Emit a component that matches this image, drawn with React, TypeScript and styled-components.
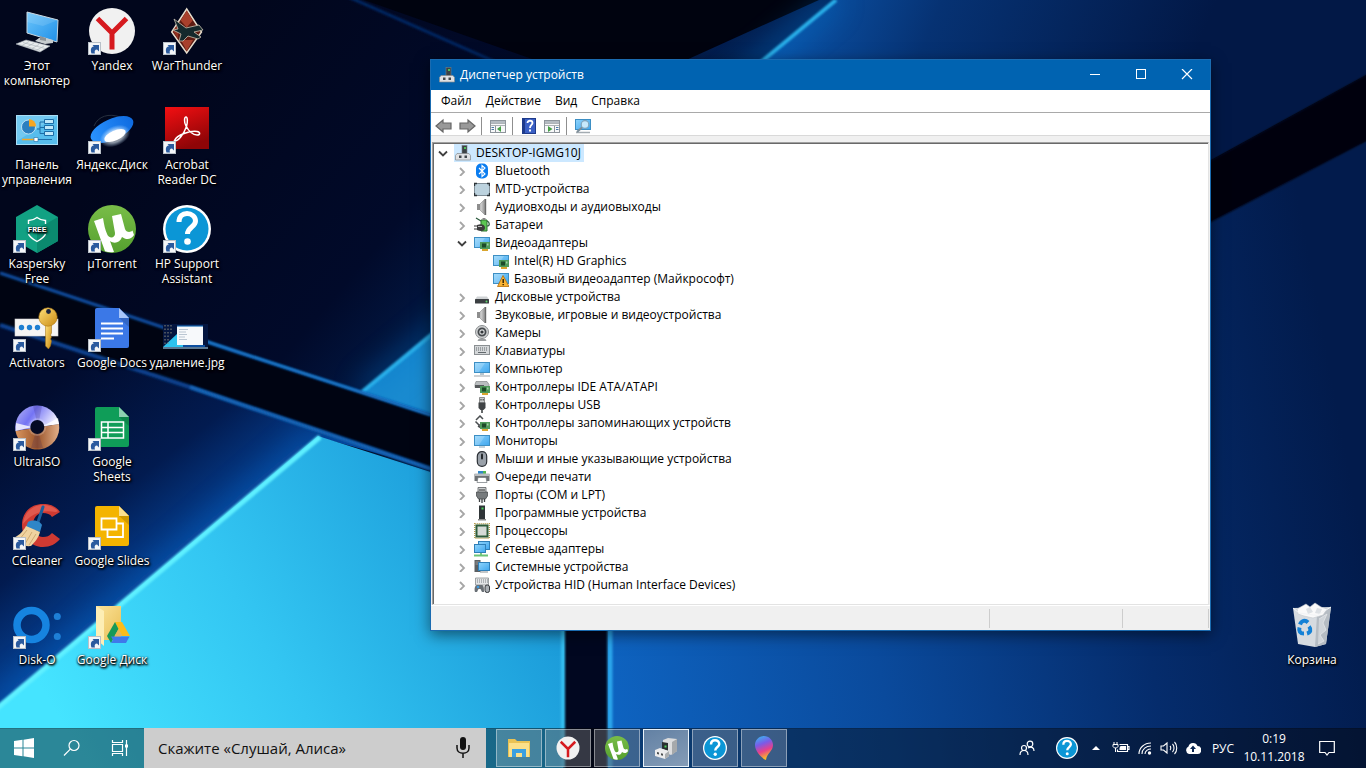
import React from "react";
import styled, { createGlobalStyle } from "styled-components";

const UI_FONT = '"Open Sans", "Noto Sans", sans-serif';

const GlobalStyle = createGlobalStyle`
  * { box-sizing: border-box; }
  body { margin: 0; font-family: ${UI_FONT}; font-size: 12px; }
  button, input { font: inherit; color: inherit; border: 0; padding: 0; background: none; border-radius: 0; }
  svg { display: block; flex: none; }
`;

const Screen = styled.div`
  position: relative;
  min-height: 100vh;
  display: flex;
  flex-direction: column;
  overflow: hidden;
  background: #010b28;
`;

const Wallpaper = styled.svg`
  position: absolute;
  inset: 0;
  width: 100%;
  height: 100%;
`;

const Desktop = styled.main`
  position: relative;
  flex: 1;
`;

const IconGrid = styled.div`
  display: grid;
  grid-auto-flow: column;
  grid-template-rows: repeat(7, 99px);
  grid-auto-columns: 74px;
  column-gap: 1px;
  width: max-content;
`;

const Shortcut = styled.button`
  display: flex;
  flex-direction: column;
  align-items: center;
  gap: 2px;
  width: 74px;
  height: 99px;
  padding-top: 8px;
  color: #fff;
  font-size: 12px;
  line-height: 15px;
  text-align: center;
  text-shadow: 0 1px 2px #000, 1px 1px 2px #000, 1px 1px 3px #000;
`;

const ShortcutLabel = styled.span<{ $wrap?: boolean }>`
  white-space: ${(p) => (p.$wrap ? "pre-line" : "nowrap")};
`;

const BinSpot = styled.div`
  position: absolute;
  right: 17px;
  bottom: 35px;
`;

/* ---------- Device manager window ---------- */

const Window = styled.section`
  position: absolute;
  left: 430px;
  top: 59px;
  width: min(781px, calc(100% - 430px));
  border: 1px solid #1a6bb0;
  background: #f0f0f0;
  color: #000;
  box-shadow: 0 4px 14px rgba(0, 0, 0, 0.5);
`;

const TitleBar = styled.header`
  display: flex;
  align-items: center;
  height: 30px;
  padding-left: 8px;
  gap: 5px;
  background: #0063b1;
  color: #fff;
`;

const Title = styled.h1`
  margin: 0;
  flex: 1;
  font-size: 12px;
  font-weight: 400;
  line-height: 16px;
`;

const CaptionButtons = styled.div`
  display: flex;
`;

const CaptionButton = styled.button`
  display: flex;
  align-items: center;
  justify-content: center;
  width: 46px;
  height: 30px;
`;

const MenuBar = styled.nav`
  display: flex;
  gap: 14px;
  height: 23px;
  padding: 0 10px;
  background: #fff;
  border-bottom: 1px solid #a9a9a9;
`;

const MenuItem = styled.button`
  line-height: 20px;
`;

const ToolBar = styled.div`
  display: flex;
  align-items: center;
  height: 23px;
  padding: 3px 4px 0;
  gap: 5px;
  background: #fff;
  border-bottom: 1px solid #d9d9d9;
`;

const ToolButton = styled.button`
  display: flex;
  width: 18px;
  height: 18px;
  align-items: center;
  justify-content: center;
`;

const ToolSeparator = styled.span`
  width: 1px;
  height: 18px;
  margin-right: 2px;
  background: #8f8f8f;
`;

const TreePane = styled.div`
  margin: 6px 1px 0;
  padding: 1px 0 10px;
  background: #fff;
  border: 1px solid;
  border-color: #a0a0a0 #e3e3e3 #e3e3e3 #a0a0a0;
  box-shadow: inset 1px 1px #696969;
`;

const Tree = styled.ul`
  list-style: none;
  margin: 0;
  padding: 0;
`;

const TreeRow = styled.div<{ $level: number }>`
  display: flex;
  align-items: center;
  gap: 3px;
  height: 18px;
  padding-left: ${(p) => 2 + p.$level * 19}px;
`;

const Expander = styled.span`
  width: 16px;
  display: flex;
  justify-content: center;
`;

const NodeBody = styled.span<{ $selected?: boolean }>`
  display: flex;
  align-items: center;
  gap: 5px;
  height: 18px;
  padding: 0 3px 0 1px;
  line-height: 18px;
  white-space: nowrap;
  background: ${(p) => (p.$selected ? "#cce8ff" : "transparent")};
`;

const StatusBar = styled.footer`
  display: flex;
  height: 25px;
  padding: 3px 1px 2px;
  border-top: 1px solid #fff;
`;

const StatusCell = styled.span<{ $width?: number }>`
  flex: ${(p) => (p.$width ? `0 0 ${p.$width}px` : "1")};
  border-right: 1px solid #cdcdcd;
`;

/* ---------- Taskbar ---------- */

const TaskBar = styled.footer`
  position: relative;
  display: flex;
  height: 40px;
  color: #fff;
  background: rgba(8, 8, 10, 0.42);
  box-shadow: inset 0 1px rgba(0, 0, 0, 0.15);
`;

const BarButton = styled.button<{ $width: number }>`
  display: flex;
  align-items: center;
  justify-content: center;
  width: ${(p) => p.$width}px;
  height: 40px;
`;

const SearchBox = styled.label`
  display: flex;
  align-items: center;
  width: 342px;
  height: 40px;
  padding: 0 14px;
  background: #cdcdcd;
  color: #111;
`;

const SearchInput = styled.input`
  flex: 1;
  min-width: 0;
  outline: none;
  font-size: 15px;
  line-height: 20px;
  &::placeholder { color: #111; opacity: 1; }
`;

const AppButtons = styled.div`
  display: flex;
  gap: 3px;
  padding: 1px 10px;
  flex: 1;
`;

const AppButton = styled.button<{ $active?: boolean }>`
  display: flex;
  align-items: center;
  justify-content: center;
  width: 46px;
  height: 38px;
  border: 1px solid ${(p) => (p.$active ? "#e8f2fa" : "rgba(255,255,255,0.42)")};
  background: ${(p) => (p.$active ? "linear-gradient(155deg, rgba(255,255,255,0.36), rgba(255,255,255,0.5))" : "rgba(255,255,255,0.2)")};
`;

const Tray = styled.div`
  display: flex;
  padding-right: 19px;
`;

const TrayIcons = styled.div`
  display: flex;
  padding-left: 4px;
`;

const Clock = styled.button`
  width: 66px;
  height: 40px;
  font-size: 12px;
  line-height: 18px;
`;

/* ---------- Desktop drawings ---------- */

const Arrow = () => (
  <g>
    <rect x="0.5" y="34.500" width="12" height="12" fill="#f4f6f8" stroke="#b9c0c8" />
    <path d="M3.500 45.500C2 41 3.500 38.500 6 38.500L4.500 37H11v6.500L9 41.500C7 41.500 6 43.500 7 45.500z" fill="#2a5a9e" />
  </g>
);

const Pic = ({ children, link = true }: { children: React.ReactNode; link?: boolean }) => (
  <svg width="48" height="48" viewBox="0 0 48 48" overflow="visible" aria-hidden="true">
    {children}
    {link && <Arrow />}
  </svg>
);

const Defs = () => (
  <defs>
    <linearGradient id="scr" x1="0" y1="0" x2="1" y2="1"><stop offset="0" stopColor="#6cc6fb" /><stop offset="1" stopColor="#1f8fe8" /></linearGradient>
    <linearGradient id="scr16" x1="0" y1="0" x2="1" y2="1"><stop offset="0" stopColor="#8fd4fc" /><stop offset="1" stopColor="#3fa6ee" /></linearGradient>
    <linearGradient id="red" x1="0" y1="0" x2="0.4" y2="1"><stop offset="0" stopColor="#f40f12" /><stop offset="1" stopColor="#8f0507" /></linearGradient>
    <linearGradient id="grn" x1="0" y1="0" x2="0" y2="1"><stop offset="0" stopColor="#79bd48" /><stop offset="1" stopColor="#55a02f" /></linearGradient>
    <linearGradient id="gold" x1="0" y1="0" x2="1" y2="1"><stop offset="0" stopColor="#ffe07a" /><stop offset="1" stopColor="#c98a12" /></linearGradient>
    <linearGradient id="discTop" x1="0" y1="0" x2="1" y2="0.4"><stop offset="0" stopColor="#b9b9f2" /><stop offset="0.45" stopColor="#7474f4" /><stop offset="1" stopColor="#f0f0ff" /></linearGradient>
    <linearGradient id="discBot" x1="0" y1="0" x2="1" y2="0"><stop offset="0" stopColor="#d9955f" /><stop offset="0.5" stopColor="#9b552b" /><stop offset="1" stopColor="#e2b08a" /></linearGradient>
    <linearGradient id="yd" x1="0" y1="0" x2="1" y2="0"><stop offset="0" stopColor="#2a93ff" /><stop offset="1" stopColor="#0f6be0" /></linearGradient>
    <linearGradient id="fold" x1="0" y1="0" x2="1" y2="1"><stop offset="0" stopColor="#fbe39a" /><stop offset="1" stopColor="#e9bf55" /></linearGradient>
    <linearGradient id="paint" x1="0" y1="0" x2="0.3" y2="1"><stop offset="0" stopColor="#2fc3f2" /><stop offset="0.4" stopColor="#7a5be8" /><stop offset="0.7" stopColor="#e8408a" /><stop offset="1" stopColor="#f7b52c" /></linearGradient>
    <linearGradient id="metal" x1="0" y1="0" x2="1" y2="0"><stop offset="0" stopColor="#e2e2e2" /><stop offset="1" stopColor="#8c8c8c" /></linearGradient>
    <radialGradient id="glow"><stop offset="0" stopColor="#fff" /><stop offset="0.6" stopColor="#e8f5ff" /><stop offset="1" stopColor="#bfe2ff" stopOpacity="0" /></radialGradient>
  </defs>
);

const MyPc = () => (
  <Pic link={false}>
    <path d="M14 4 45 12 44 34 14 25z" fill="url(#scr)" stroke="#c9d6df" strokeWidth="1" />
    <path d="M14 4 45 12 30 18 14 14z" fill="#fff" opacity="0.12" />
    <path d="m26 30 4-1 10 3v3l-8 1-10-3z" fill="#c8cdd0" />
    <path d="m27 28 6 2v3l-6-1z" fill="#8b9398" />
    <path d="m3 36 10-4 24 6-10 6z" fill="#e8ebed" stroke="#a7afb5" strokeWidth="0.600" />
    <path d="m6 36.500 21 6M10 34.500l22 6M9 37.500l7-4M14 39l7-4M19 40.500l7-4M24 42l7-4" stroke="#a9b2b8" strokeWidth="0.600" />
  </Pic>
);

const YandexMark = () => (
  <>
    <circle cx="24" cy="23" r="23" fill="#f1f1f1" />
    <path d="M9.500 10.500 24 25 38.500 10.500M24 24v17.500" fill="none" stroke="#d61a1f" strokeWidth="5" />
  </>
);

const WarThunder = () => (
  <Pic>
    <path d="M23.700 1 38.500 24 23.700 45 8.700 24z" fill="#5e1c12" stroke="#e7dccb" strokeWidth="1.500" />
    <path d="m23.700 2.500 6 10-6 7-6-7zM18 32h12l-6.300 11z" fill="#a8402c" />
    <path d="m16 14-6 9 5 8z" fill="#933020" />
    <path d="m11 11 12 9 13-3 4 5-9 2 7 5-3 2-10-3-5 5h-4l2-7-8-4 5-1z" fill="#15292c" stroke="#c9c2b0" strokeWidth="0.800" />
  </Pic>
);

const ControlPanel = () => (
  <Pic link={false}>
    <rect x="3.500" y="8.500" width="41" height="29" fill="#57bdec" stroke="#a9ddf5" />
    <path d="M4 9h40L4 34z" fill="#8fd6f5" opacity="0.500" />
    <circle cx="15.500" cy="20" r="7" fill="#2b7fc0" stroke="#d5effb" strokeWidth="0.800" />
    <path d="M16 19.500V12a7.500 7.500 0 0 1 7 7.500z" fill="#f6a623" />
    <path d="M24 22h3v-7h4M27 20.500h4M27 22v4.500h4" fill="none" stroke="#1c6da8" />
    <path d="M31.500 12.500h9v4h-9zM31.500 18.500h9v4h-9zM31.500 24.500h9v4h-9z" fill="#bfe8fa" stroke="#1c6da8" />
    <path d="M9 32.500h12" stroke="#f6a623" strokeWidth="1.500" />
    <path d="M24 32.500h15" stroke="#1c6da8" />
    <path d="M21 30.500h4v4h-4z" fill="#fff" stroke="#1c6da8" strokeWidth="0.600" />
  </Pic>
);

const YandexDisk = () => (
  <Pic>
    <path d="M6 19c4-10 15-13 26-9" fill="none" stroke="#27303f" strokeWidth="1" />
    <ellipse cx="24" cy="22.500" rx="23" ry="10.500" transform="rotate(-24 24 22.500)" fill="url(#yd)" />
    <ellipse cx="27" cy="29" rx="16" ry="10" transform="rotate(-24 27 29)" fill="url(#glow)" opacity="0.600" />
    <ellipse cx="27" cy="28.500" rx="11.500" ry="5" transform="rotate(-24 27 28.500)" fill="#fff" />
  </Pic>
);

const Acrobat = () => (
  <Pic>
    <rect x="2" y="0" width="44" height="42" fill="url(#red)" />
    <path d="M11.500 33.500c3.500 1.500 9-6 12-14 1.200-4 1.200-9.500-.5-9.500s-2.200 5 0 9c3 5.500 7.500 9 11 9 3.500 0 3.500-3 0-3.500-7-.8-20 3-22.500 9z" fill="none" stroke="#fff" strokeWidth="1.500" />
  </Pic>
);

const Kaspersky = () => (
  <Pic>
    <path d="M24-1 45 11v24L24 47 3 35V11z" fill="#12a183" />
    <path d="M24 23 45 11v24L24 47z" fill="#0b8a6f" />
    <path d="M15.500 18v-3.500c3 0 6-1 8.500-3 2.500 2 5.500 3 8.500 3V18M15.500 28c1 3 5 5.500 8.500 7.500 3.500-2 7.500-4.500 8.500-7.500" fill="none" stroke="#fff" strokeWidth="1.400" />
    <text x="24" y="26" textAnchor="middle" fontFamily="Liberation Mono, monospace" fontWeight="700" fontSize="8" fill="#fff">FREE</text>
  </Pic>
);

const MuMark = () => (
  <>
    <circle cx="24" cy="23" r="24" fill="url(#grn)" />
    <path d="M6 15 15 12c1 6 2 12 4.500 17 2 4 8 3 7.500-2L24 10l9-2 4 15c1 3 5 4 7.500 1.500L46 29c-3 5-8 5-12 2-2 6-8 7-12 4l4 11c-3 .5-6 .3-9-.8z" fill="#fff" />
  </>
);

const HelpMark = () => (
  <>
    <circle cx="24" cy="23" r="24" fill="#fff" />
    <circle cx="24" cy="23" r="21.500" fill="#0b96d6" />
    <path d="M16 16c0-6 3.500-8.500 8-8.500s8.500 3 8.500 7.500c0 6-8 6-8 13" fill="none" stroke="#fff" strokeWidth="5" />
    <circle cx="24.500" cy="35.500" r="3.300" fill="#fff" />
  </>
);

const Activators = () => (
  <Pic>
    <rect x="2" y="14" width="43" height="17" fill="#f5f5f5" stroke="#d2d2d2" strokeWidth="0.600" />
    <g fill="#1e7fd2"><circle cx="8.500" cy="22.500" r="2.700" /><circle cx="16.500" cy="22.500" r="2.700" /><circle cx="24.500" cy="22.500" r="2.700" /></g>
    <path d="M32.500 20h6v8l-1 2 1 2-1 2 1 2-1 5-2 3-3-3z" fill="url(#gold)" stroke="#9a6a10" strokeWidth="0.500" />
    <circle cx="35" cy="12" r="9.200" fill="url(#gold)" stroke="#b07b14" strokeWidth="0.600" />
    <circle cx="35.500" cy="6.500" r="2.400" fill="#1b2440" />
  </Pic>
);

const Sheet = ({ color, fold, children }: { color: string; fold: string; children: React.ReactNode }) => (
  <Pic>
    <path d="M9 3h22l10 10v28a2 2 0 0 1-2 2H9a2 2 0 0 1-2-2V5a2 2 0 0 1 2-2z" fill={color} />
    <path d="M31 13h10v9z" fill="#000" opacity="0.150" />
    <path d="M31 3l10 10H31z" fill={fold} />
    {children}
  </Pic>
);

const Docs = () => (
  <Sheet color="#3b78e7" fold="#a6c5fa">
    <path d="M13 18.500h22M13 23.500h22M13 28.500h22M13 33.500h13" stroke="#fff" strokeWidth="2.200" />
  </Sheet>
);
const Sheets = () => (
  <Sheet color="#0f9d58" fold="#8ed1b1">
    <path d="M13.500 18h22v16h-22zM13.500 23.500h22M13.500 28.500h22M20 18v16" fill="none" stroke="#fff" strokeWidth="1.500" />
  </Sheet>
);
const Slides = () => (
  <Sheet color="#f4b400" fold="#fbe08f">
    <path d="M19.500 27v7H35V20.500h-6" fill="none" stroke="#fff" strokeWidth="1.800" />
    <path d="M13.500 15.500h15v11h-15z" fill="none" stroke="#fff" strokeWidth="1.800" />
  </Sheet>
);

const Picture = () => (
  <Pic link={false}>
    <rect x="0" y="19" width="45" height="25" fill="#04153f" />
    <path d="M0 42 14 29l6 2v11H0z" fill="#2cc2ee" />
    <path d="M20 40h22v2H20z" fill="#0c4fa0" />
    <path d="M0 42h45v2H0z" fill="#5a7892" />
    <path d="M2 20v20M5 20v19M8 20v9" stroke="#8b8b7d" strokeDasharray="1.500 2" />
    <rect x="14" y="21" width="26" height="19" fill="#f7f9fb" />
    <path d="M14 21h26" stroke="#1769b4" strokeWidth="1.200" />
    <path d="M16 24.500h9M16 27h7M16 29.500h8M16 32h6M16 34.500h8" stroke="#a9b9c8" strokeWidth="0.800" />
  </Pic>
);

const Disc = () => (
  <Pic>
    <path d="M2.500 27a22 22 0 1 1 43.500-7z" fill="url(#discTop)" />
    <path d="M2.500 27 46 20a22 22 0 0 1-43.500 7z" fill="url(#discBot)" />
    <path d="M2.500 27 3 19l16 4zM46 20l-1-6-15 8z" fill="#fff" opacity="0.800" />
    <path d="M20 2h9l-4 20zM18 44h12l-6-20z" fill="#2a1a60" opacity="0.180" />
    <circle cx="24.300" cy="23" r="9" fill="#fff" opacity="0.200" />
    <circle cx="24.300" cy="23" r="7" fill="#050a24" />
  </Pic>
);

const CCleaner = () => (
  <Pic>
    <path d="M47 9C43 3 37 1 30 1 17 1 9 10 9 22s9 22 21 22c7 0 13-3 17-8l-8-6c-3 3-5 4-9 4-6 0-10-5-10-12s4-12 10-12c4 0 7 1 9 4z" fill="#cf3a32" />
    <path d="M45 8c-4-4-9-6-15-6C18 2 11 11 10 21c8-10 18-15 33-12z" fill="#e8675a" opacity="0.700" />
    <path d="M30 4 25 19" stroke="#1c5f9c" strokeWidth="3" strokeLinecap="round" />
    <path d="M15 19c5-3 12-1 14 3l-2 7-14-5z" fill="#2f86c8" />
    <path d="M13 23l14 6c-1 5-5 10-9 14-7 1-13-3-18-8 4-1 10-6 13-12z" fill="#f0d3a0" />
    <path d="m14 27-8 10M19 29l-7 12M23 31l-7 11" stroke="#c79f63" strokeWidth="0.800" />
  </Pic>
);

const DiskO = () => (
  <Pic>
    <circle cx="18.500" cy="23" r="14.500" fill="none" stroke="#1684e0" strokeWidth="7.500" />
    <circle cx="44.300" cy="14.500" r="3.500" fill="#1e7fd6" />
    <circle cx="44.300" cy="34.500" r="3.500" fill="#1e7fd6" />
  </Pic>
);

const GoogleDisk = () => (
  <Pic>
    <path d="M8 4h25v34H14z" fill="url(#fold)" />
    <path d="M8 4l8 5v35l-8-7z" fill="#fdeeb5" />
    <path d="m27 20 7 0 8 14h-8z" fill="#fbbc1c" />
    <path d="m27 20 3.500 7L23 41l-4-7z" fill="#159957" />
    <path d="M23 34.500h18.500L38 41H23l2-3z" fill="#3f78ea" />
    <path d="m30.500 27 4 7h-8z" fill="#e2b85a" />
  </Pic>
);

const Bin = () => (
  <Pic link={false}>
    <path d="M5 6 43 5 38 42 27 45 10 42z" fill="#d6dbe0" />
    <path d="M29 13 43 5 38 42 27 45z" fill="#b5bcc3" />
    <path d="M9 7 18 2l4 3 5-4 6 4 6 2-4 6-10 3-9-2-6-2z" fill="#fafafa" stroke="#c3c8cd" strokeWidth="0.600" />
    <path d="m18 7 4-2 3 5-5 2zM29 6l5 1-2 5-5-1z" fill="#dde1e5" />
    <path d="M5 6 11 11l18 2.500L43 5" fill="none" stroke="#f2f4f6" strokeWidth="1" />
    <path d="m31 17 8-5-4 9 3 7-6 5 4 6-6 3" fill="#cfd4d9" stroke="#e3e6e9" strokeWidth="0.800" />
    <g fill="none" stroke="#1481d6" strokeWidth="4">
      <path d="M12 22.500c1.500-4 5-5 8-2" /><path d="M21 24.500c2.500 3 1.500 6-2 7" /><path d="M16 31.500c-4 0-5.500-2.500-4.500-6" />
    </g>
  </Pic>
);

type Item = { label: string; art: React.ReactNode; wrap?: boolean };
const shortcuts: Item[] = [
  { label: "Этот\nкомпьютер", art: <MyPc />, wrap: true },
  { label: "Панель\nуправления", art: <ControlPanel />, wrap: true },
  { label: "Kaspersky\nFree", art: <Kaspersky />, wrap: true },
  { label: "Activators", art: <Activators /> },
  { label: "UltraISO", art: <Disc /> },
  { label: "CCleaner", art: <CCleaner /> },
  { label: "Disk-O", art: <DiskO /> },
  { label: "Yandex", art: <Pic><YandexMark /></Pic> },
  { label: "Яндекс.Диск", art: <YandexDisk /> },
  { label: "µTorrent", art: <Pic><MuMark /></Pic> },
  { label: "Google Docs", art: <Docs /> },
  { label: "Google\nSheets", art: <Sheets />, wrap: true },
  { label: "Google Slides", art: <Slides /> },
  { label: "Google Диск", art: <GoogleDisk /> },
  { label: "WarThunder", art: <WarThunder /> },
  { label: "Acrobat\nReader DC", art: <Acrobat />, wrap: true },
  { label: "HP Support\nAssistant", art: <Pic><HelpMark /></Pic>, wrap: true },
  { label: "удаление.jpg", art: <Picture /> },
];

/* ---------- Tree drawings ---------- */

const Chip = () => (
  <g>
    <rect x="6" y="7" width="10" height="7" fill="#4f9a5a" />
    <path d="M8 8.500h4v4H8z" fill="#1d4a28" />
    <path d="M13 8.500h1.500v2H13z" fill="#9fd0a4" />
    <path d="M8 14h6v2H8z" fill="#d9a52e" />
  </g>
);
const Screen16 = () => (
  <g>
    <rect x="0.500" y="2.500" width="15" height="10" fill="url(#scr16)" stroke="#3d8fc4" />
    <path d="M1 3h10L5 12H1z" fill="#fff" opacity="0.200" />
  </g>
);

const glyphs: Record<string, React.ReactNode> = {
  root: <g><rect x="7" y="0.500" width="5" height="9.500" fill="#3c4245" stroke="#777d80" strokeWidth="0.600" /><rect x="9" y="2" width="2" height="2" fill="#4fc05a" /><path d="M2 8.500h12l1.500 2V15H.5v-4.500z" fill="#dfe1e3" stroke="#85898c" strokeWidth="0.700" /><path d="M4 10.500h2.500V13H4zM9.500 10.500H12V13H9.500z" fill="#42484c" /></g>,
  bt: <g><rect x="2" y="0.500" width="12" height="15" rx="5" fill="#0a7df0" /><path d="m5 5 6 6-3 2.500v-11L11 5l-6 6" fill="none" stroke="#fff" strokeWidth="1.100" /></g>,
  mtd: <g><rect x="0.500" y="2.500" width="15" height="12" rx="1" fill="#bcd2de" stroke="#7f8d97" /><path d="M0.500 5V2.500H3M13 2.500h2.500V5M0.500 12v2.500H3M13 14.500h2.500V12" fill="none" stroke="#2d3439" strokeWidth="1.400" /></g>,
  audio: <g><path d="M3 5h3v6H3z" fill="#8e8e8e" /><path d="m6 5 5-5v16l-5-5z" fill="url(#metal)" stroke="#8a8a8a" strokeWidth="0.600" /><path d="M11 0h1.200v16H11z" fill="#6a6a6a" /></g>,
  battery: <g><path d="M7 3h6v11H7z" fill="#5cc653" stroke="#2c7430" /><path d="M8.500 1h3v2h-3z" fill="#888" /><path d="M2 1l5 3M13 9c3 0 3-4 0-5" fill="none" stroke="#28583a" strokeWidth="1.200" /><path d="M0 9h3M0 12h3" stroke="#333" /><path d="M3 8c5-2 8 0 8 3s-4 4-8 2z" fill="#3c3c3c" /><path d="M4 9.500h4" stroke="#bbb" /></g>,
  video: <g><Screen16 /><Chip /></g>,
  warn: <g><Screen16 /><path d="M10 4.500 16 15.500H4.500z" fill="#f9b233" stroke="#b86e0a" strokeWidth="0.800" /><path d="M10.200 8v4M10.200 13v1.300" stroke="#2b1b00" strokeWidth="1.400" /></g>,
  disk: <g><path d="M3 7.500h10l2 3H1z" fill="#d0d3d5" /><rect x="1" y="10" width="14" height="4.500" rx="0.500" fill="#3b3f42" /><circle cx="12.500" cy="12.500" r="1" fill="#5fd36a" /></g>,
  camera: <g><circle cx="8" cy="7" r="6.500" fill="#cfd1d2" stroke="#8b8e90" /><circle cx="8" cy="7" r="3.600" fill="#d8dadb" stroke="#45494c" strokeWidth="1.800" /><circle cx="8" cy="7" r="1.600" fill="#33373a" /><path d="M4.500 14h7l1 2h-9z" fill="#9c9fa1" /></g>,
  keyboard: <g><rect x="0.500" y="2.500" width="15" height="9" fill="#d4d7d9" stroke="#8a8f92" /><path d="M2 5h12M2 7h12" stroke="#62686c" strokeDasharray="1 1" /><path d="M4 9.500h8" stroke="#62686c" /></g>,
  computer: <g><rect x="0.500" y="1.500" width="15" height="10" fill="url(#scr16)" stroke="#3d8fc4" /><path d="M1 2h10L5 11H1z" fill="#fff" opacity="0.200" /><path d="M0 15h16" stroke="#9fa6ab" /><path d="M6 12h4v2H6z" fill="#b5c5cf" /></g>,
  ide: <g><path d="M2 2.500h11l2 3v3H1v-3z" fill="#b9bdbf" stroke="#76797b" strokeWidth="0.600" /><path d="M1 6h9v3H1z" fill="#55595b" /><Chip /></g>,
  usb: <g><path d="M5.500 0.500h5V6h-5z" fill="#c9cccd" stroke="#666" strokeWidth="0.700" /><path d="M6.500 2h1v1.500h-1zM8.700 2h1v1.500h-1z" fill="#333" /><path d="M4.500 5.500h7V11l-2 2h-3l-2-2z" fill="#404446" /><path d="M8 12v4" stroke="#404446" strokeWidth="1.600" /></g>,
  storage: <g><path d="m2 5 4-4 3 3M1.500 6.500 5 10h3M4 11l5 3" fill="none" stroke="#4a4e50" strokeWidth="1.500" /><Chip /></g>,
  monitor: <g><rect x="0.500" y="2.500" width="15" height="10" fill="url(#scr16)" stroke="#3d8fc4" /><path d="M1 3h10L5 12H1z" fill="#fff" opacity="0.200" /><path d="M5 13.500h6v1H5z" fill="#8da6b7" /></g>,
  mouse: <g><rect x="3.300" y="0.700" width="9.400" height="14.600" rx="4.500" fill="#9aa1a9" stroke="#2b2f35" strokeWidth="1.200" /><rect x="7" y="2.500" width="2" height="6" rx="1" fill="#24282c" /></g>,
  printer: <g><path d="M4 2h8v3H4z" fill="#2f86c8" /><path d="M9 2h3v3H9z" fill="#4fb653" /><path d="M.5 5h15v7H.5z" fill="#6d7174" /><path d="M.5 4.500h15V7H.5z" fill="#b9bdc0" /><path d="M4 8.500h8l1 5H3z" fill="#fff" stroke="#70757a" strokeWidth="0.700" /></g>,
  port: <g><path d="M4 0.500h8v5H4z" fill="#c9cccd" stroke="#5e6163" strokeWidth="0.800" /><path d="M5.500 2h1v2h-1zM7.500 2h1v2h-1zM9.500 2h1v2h-1z" fill="#333" /><path d="M2.500 5h11v4l-2 3h-7l-2-3z" fill="#777b7d" stroke="#3d4042" strokeWidth="0.700" /><path d="M5.500 12v3M8 12v4M10.500 12v3" stroke="#3d4042" strokeWidth="1.300" /></g>,
  soft: <g><path d="M5 0.500h6V14H5z" fill="#2f3437" /><path d="M4 14h8v1.500H4z" fill="#888" /><path d="M7.500 2.500h2v2h-2z" fill="#49d15b" /></g>,
  cpu: <g><rect x="0.700" y="0.700" width="14.600" height="14.600" fill="none" stroke="#b29a4c" strokeWidth="1.400" strokeDasharray="1 1" /><rect x="1.500" y="1.500" width="13" height="13" fill="#2d5c3b" /><rect x="3.500" y="3.500" width="9" height="9" fill="#d5dad6" /></g>,
  net: <g><rect x="4.500" y="0.500" width="11" height="8" fill="url(#scr16)" stroke="#2f7fb8" /><rect x="0.500" y="3.500" width="11" height="8" fill="url(#scr16)" stroke="#2f7fb8" /><path d="M7 12v2M0 14.500h14" stroke="#6cc477" strokeWidth="1.800" /></g>,
  system: <g><path d="M.5 1h6v12h-6z" fill="#5b5f62" /><path d="M1.500 3h4M1.500 5h4" stroke="#b0b0b0" strokeWidth="0.700" /><rect x="4.500" y="3.500" width="11" height="8" fill="url(#scr16)" stroke="#2f7fb8" /><path d="M6 13h8" stroke="#8a8f92" /></g>,
  hid: <g><path d="M1.500 1h13v7h-13z" fill="#e3e5e7" stroke="#8a8f92" strokeWidth="0.800" /><path d="M3 3h11M3 5h11" stroke="#7a8084" strokeDasharray="1 1" /><path d="M1 15c-1-3 0-7 2-7h5c2 0 2 4 2 7H8L6.500 12h-2L3 15z" fill="#6a7076" /><circle cx="4" cy="10" r="1.300" fill="#3e9be0" /><rect x="11" y="8" width="4.500" height="7.500" rx="2" fill="#a9aeb3" stroke="#34383c" /></g>,
};

const TreeGlyph = ({ kind }: { kind: string }) => (
  <svg width="16" height="16" viewBox="0 0 16 16" aria-hidden="true">{glyphs[kind]}</svg>
);

const Chevron = ({ open }: { open?: boolean }) => (
  <svg width="10" height="10" viewBox="0 0 10 10" aria-hidden="true">
    {open
      ? <path d="M1 3.500l4 4 4-4" fill="none" stroke="#404040" strokeWidth="1.800" />
      : <path d="M3 2l4 4-4 4" fill="none" stroke="#a6a6a6" strokeWidth="1.800" />}
  </svg>
);

type Node = { level: number; label: string; icon: string; open?: boolean; leaf?: boolean; selected?: boolean };
const nodes: Node[] = [
  { level: 0, label: "DESKTOP-IGMG10J", icon: "root", open: true, selected: true },
  { level: 1, label: "Bluetooth", icon: "bt" },
  { level: 1, label: "MTD-устройства", icon: "mtd" },
  { level: 1, label: "Аудиовходы и аудиовыходы", icon: "audio" },
  { level: 1, label: "Батареи", icon: "battery" },
  { level: 1, label: "Видеоадаптеры", icon: "video", open: true },
  { level: 2, label: "Intel(R) HD Graphics", icon: "video", leaf: true },
  { level: 2, label: "Базовый видеоадаптер (Майкрософт)", icon: "warn", leaf: true },
  { level: 1, label: "Дисковые устройства", icon: "disk" },
  { level: 1, label: "Звуковые, игровые и видеоустройства", icon: "audio" },
  { level: 1, label: "Камеры", icon: "camera" },
  { level: 1, label: "Клавиатуры", icon: "keyboard" },
  { level: 1, label: "Компьютер", icon: "computer" },
  { level: 1, label: "Контроллеры IDE ATA/ATAPI", icon: "ide" },
  { level: 1, label: "Контроллеры USB", icon: "usb" },
  { level: 1, label: "Контроллеры запоминающих устройств", icon: "storage" },
  { level: 1, label: "Мониторы", icon: "monitor" },
  { level: 1, label: "Мыши и иные указывающие устройства", icon: "mouse" },
  { level: 1, label: "Очереди печати", icon: "printer" },
  { level: 1, label: "Порты (COM и LPT)", icon: "port" },
  { level: 1, label: "Программные устройства", icon: "soft" },
  { level: 1, label: "Процессоры", icon: "cpu" },
  { level: 1, label: "Сетевые адаптеры", icon: "net" },
  { level: 1, label: "Системные устройства", icon: "system" },
  { level: 1, label: "Устройства HID (Human Interface Devices)", icon: "hid" },
];

/* ---------- Toolbar drawings ---------- */

const ArrowTool = ({ back }: { back?: boolean }) => (
  <svg width="18" height="16" viewBox="0 0 18 16" aria-hidden="true">
    <path
      d={back ? "M1 8l7-6v3h8v6H8v3z" : "M17 8l-7-6v3H2v6h8v3z"}
      fill="#999" stroke="#666" strokeWidth="1.200"
    />
  </svg>
);

const PanelTool = ({ flip }: { flip?: boolean }) => (
  <svg width="16" height="16" viewBox="0 0 16 16" aria-hidden="true">
    <rect x="0.500" y="2.500" width="15" height="12" fill="#f7f8f9" stroke="#8d949b" />
    <path d="M1 3h14v2H1z" fill="#b4bbc2" /><path d="M1 5.500h14M1 7.500h14" stroke="#8d949b" strokeWidth="0.700" />
    {flip ? (
      <><path d="M10.500 8v6" stroke="#8d949b" /><path d="M12 9.500h2.500M12 11.500h2.500" stroke="#4a78a8" /><path d="M4 8l4.500 3L4 14z" fill="#46a046" /></>
    ) : (
      <><path d="M5.500 8v6" stroke="#8d949b" /><path d="M1.500 9.500H4M1.500 11.500H4" stroke="#4a78a8" /><path d="M11 8l-4 3 4 3z" fill="#46a046" /></>
    )}
  </svg>
);

const HelpTool = () => (
  <svg width="14" height="16" viewBox="0 0 14 16" aria-hidden="true">
    <rect x="0.500" y="0.500" width="13" height="15" fill="#3a5fc4" stroke="#1e3a8a" />
    <path d="M1 1h2v14H1z" fill="#1e3a8a" />
    <path d="M5.500 5c0-3 5-3 5 0 0 2-2.500 2-2.500 5" fill="none" stroke="#fff" strokeWidth="1.800" />
    <path d="M7 11.500h2v2H7z" fill="#fff" />
  </svg>
);

const ScanTool = () => (
  <svg width="18" height="16" viewBox="0 0 18 16" aria-hidden="true">
    <rect x="1.500" y="1.500" width="15" height="10" fill="url(#scr16)" stroke="#3d8fc4" />
    <path d="M2 14.500h14" stroke="#a3abb1" strokeWidth="1.500" />
    <circle cx="11" cy="6.500" r="3.800" fill="#c6e9fc" stroke="#7fa3ba" strokeWidth="1.200" />
    <path d="M8 9.500 3 14" stroke="#7c8d99" strokeWidth="2" />
  </svg>
);

/* ---------- Taskbar drawings ---------- */

const Small = ({ size = 24, children }: { size?: number; children: React.ReactNode }) => (
  <svg width={size} height={size} viewBox="0 -1 48 48" overflow="visible" aria-hidden="true">{children}</svg>
);

const line = { fill: "none", stroke: "#fff", strokeWidth: 1.2 };

const WallpaperArt = () => (
  <Wallpaper viewBox="0 0 1366 768" preserveAspectRatio="xMidYMid slice" aria-hidden="true">
    <Defs />
    <defs>
      <filter id="soft" filterUnits="userSpaceOnUse" x="-20" y="-20" width="1406" height="808"><feGaussianBlur stdDeviation="1.2" /></filter>
      <filter id="haze" filterUnits="userSpaceOnUse" x="-60" y="-60" width="1486" height="888"><feGaussianBlur stdDeviation="14" /></filter>
      <linearGradient id="leftTop" gradientUnits="userSpaceOnUse" x1="250" y1="0" x2="640" y2="330"><stop offset="0" stopColor="#01061c" /><stop offset="0.500" stopColor="#010a2a" /><stop offset="1" stopColor="#043070" /></linearGradient>
      <linearGradient id="leftLow" gradientUnits="userSpaceOnUse" x1="60" y1="380" x2="200" y2="560"><stop offset="0" stopColor="#010c2e" /><stop offset="0.550" stopColor="#021b50" /><stop offset="1" stopColor="#0648a0" /></linearGradient>
      <linearGradient id="right" gradientUnits="userSpaceOnUse" x1="770" y1="60" x2="1130" y2="210"><stop offset="0" stopColor="#0b53a8" /><stop offset="0.350" stopColor="#063273" /><stop offset="1" stopColor="#021846" /></linearGradient>
      <linearGradient id="rightLow" gradientUnits="userSpaceOnUse" x1="612" y1="700" x2="1366" y2="560"><stop offset="0" stopColor="#0e63c0" /><stop offset="0.350" stopColor="#0a4a9c" /><stop offset="0.700" stopColor="#052c6c" /><stop offset="1" stopColor="#021b4c" /></linearGradient>
      <linearGradient id="pane" gradientUnits="userSpaceOnUse" x1="60" y1="720" x2="470" y2="480"><stop offset="0" stopColor="#45e4ff" /><stop offset="0.450" stopColor="#33c6f2" /><stop offset="1" stopColor="#1b9bd9" /></linearGradient>
    </defs>
    <rect width="1366" height="768" fill="#010820" />
    <path d="M0 0H836L362 392 431 414 0 273z" fill="url(#leftTop)" />
    <path d="M350-5 620 90 830-5z" fill="#00030f" />
    <path d="M344-5 500 64" stroke="#062a66" strokeWidth="3" filter="url(#soft)" />
    <path d="M836 0H1366V75L700 440 431 414 362 392z" fill="url(#right)" />
    <path d="M431 336 362 392 431 416z" fill="#1a8bd0" />
    <path d="M500 700 1211 221 1366 141V768H500z" fill="url(#rightLow)" />
    <path d="M1180 178 1376 70V136L1180 238z" fill="#00040f" filter="url(#soft)" />
    <path d="M0 325 431 468 318 437 0 705z" fill="url(#leftLow)" />
    <path d="M836 0 362 392" stroke="#1173c8" strokeWidth="14" opacity="0.500" filter="url(#haze)" />
    <path d="M836 0 362 392" stroke="#2bb0ea" strokeWidth="4" filter="url(#soft)" />
    <path d="M318 437 0 705" stroke="#0a66c4" strokeWidth="18" opacity="0.500" filter="url(#haze)" />
    <path d="M0 273 240 353 431 414 600 470V520L431 468 190 387 0 325z" fill="#000412" />
    <path d="M318 436 431 472 566 520V768H0V705z" fill="url(#pane)" />
    <path d="M565 500H608V768H563z" fill="#010720" />
    <path d="M0 273 240 353 431 415" fill="none" stroke="#0f4fa4" strokeWidth="3" filter="url(#soft)" />
    <path d="M190 336 431 415" stroke="#1c86d8" strokeWidth="2" filter="url(#soft)" />
    <path d="M0 325 190 387 431 469" fill="none" stroke="#0a4290" strokeWidth="4" filter="url(#soft)" />
    <path d="M190 387 431 469" stroke="#1668b8" strokeWidth="3" filter="url(#soft)" />
    <path d="M320 437-4 709" stroke="#5ff0ff" strokeWidth="5" filter="url(#soft)" />
    <path d="M563 600V768" stroke="#35bdf0" strokeWidth="4" filter="url(#soft)" />
    <path d="M610 600V768" stroke="#2aa6ec" strokeWidth="5" filter="url(#soft)" />
  </Wallpaper>
);

export default function App() {
  return (
    <Screen>
      <GlobalStyle />
      <WallpaperArt />
      <Desktop>
        <IconGrid>
          {shortcuts.map((s) => (
            <Shortcut key={s.label} type="button">
              {s.art}
              <ShortcutLabel $wrap={s.wrap}>{s.label}</ShortcutLabel>
            </Shortcut>
          ))}
        </IconGrid>
        <BinSpot>
          <Shortcut type="button"><Bin /><ShortcutLabel>Корзина</ShortcutLabel></Shortcut>
        </BinSpot>

        <Window aria-label="Диспетчер устройств">
          <TitleBar>
            <TreeGlyph kind="root" />
            <Title>Диспетчер устройств</Title>
            <CaptionButtons>
              <CaptionButton type="button" aria-label="Свернуть"><svg width="12" height="12"><path d="M1 5.500h10" stroke="#fff" /></svg></CaptionButton>
              <CaptionButton type="button" aria-label="Развернуть"><svg width="12" height="12"><rect x="1.500" y="0.500" width="9" height="9" fill="none" stroke="#fff" /></svg></CaptionButton>
              <CaptionButton type="button" aria-label="Закрыть"><svg width="12" height="12"><path d="M1 0l10 10M11 0 1 10" stroke="#fff" strokeWidth="1.200" /></svg></CaptionButton>
            </CaptionButtons>
          </TitleBar>
          <MenuBar>
            {["Файл", "Действие", "Вид", "Справка"].map((m) => <MenuItem key={m} type="button">{m}</MenuItem>)}
          </MenuBar>
          <ToolBar>
            <ToolButton type="button" aria-label="Назад"><ArrowTool back /></ToolButton>
            <ToolButton type="button" aria-label="Вперёд"><ArrowTool /></ToolButton>
            <ToolSeparator />
            <ToolButton type="button" aria-label="Показать дерево консоли"><PanelTool /></ToolButton>
            <ToolSeparator />
            <ToolButton type="button" aria-label="Справка"><HelpTool /></ToolButton>
            <ToolButton type="button" aria-label="Показать панель действий"><PanelTool flip /></ToolButton>
            <ToolSeparator />
            <ToolButton type="button" aria-label="Обновить конфигурацию"><ScanTool /></ToolButton>
          </ToolBar>
          <TreePane>
            <Tree role="tree">
              {nodes.map((n) => (
                <li key={n.label} role="treeitem" aria-level={n.level + 1} aria-selected={!!n.selected} aria-expanded={n.leaf ? undefined : !!n.open}>
                  <TreeRow $level={n.level}>
                    <Expander>{!n.leaf && <Chevron open={n.open} />}</Expander>
                    <NodeBody $selected={n.selected}><TreeGlyph kind={n.icon} />{n.label}</NodeBody>
                  </TreeRow>
                </li>
              ))}
            </Tree>
          </TreePane>
          <StatusBar><StatusCell /><StatusCell $width={133} /><StatusCell $width={86} /></StatusBar>
        </Window>
      </Desktop>

      <TaskBar>
        <BarButton $width={48} type="button" aria-label="Пуск">
          <svg width="20" height="20" viewBox="0 0 20 20"><path d="M0 3l8.500-1.200v7.700H0zM9.500 1.700 20 0v9.500H9.500zM0 10.500h8.500v7.700L0 17zM9.500 10.500H20V20L9.500 18.300z" fill="#fff" /></svg>
        </BarButton>
        <BarButton $width={48} type="button" aria-label="Поиск">
          <svg width="18" height="18" viewBox="0 0 18 18"><circle cx="11" cy="6.500" r="5" {...line} /><path d="M7.300 10.200 1 16.500" {...line} /></svg>
        </BarButton>
        <BarButton $width={48} type="button" aria-label="Представление задач">
          <svg width="18" height="18" viewBox="0 0 18 18"><path d="M1.500 1v2.500h10V1M1.500 17v-2.500h10V17M1.500 5.500h10v7h-10zM15.500 1v16" {...line} /><path d="M14 5.500h3v3h-3z" fill="#fff" /></svg>
        </BarButton>
        <SearchBox>
          <SearchInput type="text" aria-label="Поиск" placeholder="Скажите «Слушай, Алиса»" />
          <svg width="18" height="22" viewBox="0 0 18 22" aria-hidden="true">
            <rect x="6" y="0" width="6" height="13" rx="3" fill="#111" />
            <path d="M3 8v3c0 7 12 7 12 0V8M9 16v5" fill="none" stroke="#111" strokeWidth="1.500" />
          </svg>
        </SearchBox>
        <AppButtons>
          <AppButton type="button" aria-label="Проводник">
            <svg width="22" height="20" viewBox="0 0 22 20">
              <path d="M0 1h7l2 2h13v16H0z" fill="#e9c254" /><path d="M1 5h20v14H1z" fill="#fbe08a" />
              <path d="M4 19v-8h14v8h-4v-4H8v4z" fill="#3aa0e0" />
            </svg>
          </AppButton>
          <AppButton type="button" aria-label="Yandex"><Small><YandexMark /></Small></AppButton>
          <AppButton type="button" aria-label="µTorrent"><Small><MuMark /></Small></AppButton>
          <AppButton $active type="button" aria-label="Диспетчер устройств">
            <svg width="26" height="24" viewBox="0 0 26 24">
              <path d="M10 4 15 2l9 1v12l-6 4-8-3z" fill="#dcddde" /><path d="M19 6l5-3v12l-5 4z" fill="#a6a9ab" />
              <path d="M9 6l6 1v8l-6-2z" fill="#2a2f31" /><path d="M11.500 9.500h2v2h-2z" fill="#4fd05c" />
              <path d="M2 14l5-2 9 3v5l-4 3-10-3z" fill="#ececed" /><path d="M12 18l4-3v5l-4 3z" fill="#aaadaf" />
              <path d="M4 16l2 .6v2l-2-.6zM8 17.200l2 .6v2l-2-.6z" fill="#4a4e50" />
            </svg>
          </AppButton>
          <AppButton type="button" aria-label="HP Support Assistant"><Small><HelpMark /></Small></AppButton>
          <AppButton type="button" aria-label="Paint 3D">
            <svg width="20" height="26" viewBox="0 0 20 26"><path d="M10 1c5 0 9 4 9 9 0 6-6 8-7 15-3-1-11-8-11-15 0-5 4-9 9-9z" fill="url(#paint)" /></svg>
          </AppButton>
        </AppButtons>
        <Tray>
          <BarButton $width={40} type="button" aria-label="Люди">
            <svg width="16" height="16" viewBox="0 0 16 16"><circle cx="11" cy="4" r="2.800" {...line} /><circle cx="5" cy="8" r="2.500" {...line} /><path d="M1 15c0-3 1.500-4.500 4-4.500S9 12 9 15M9 8c4-2 6 0 6 3" {...line} /></svg>
          </BarButton>
          <BarButton $width={40} type="button" aria-label="HP"><Small size={22}><HelpMark /></Small></BarButton>
          <BarButton $width={18} type="button" aria-label="Скрытые значки"><svg width="8" height="4"><path d="M4 0l4 4H0z" fill="#fff" /></svg></BarButton>
          <TrayIcons>
            <BarButton $width={24} type="button" aria-label="Батарея">
              <svg width="18" height="16" viewBox="0 0 18 16"><path d="M7.500 4.500h8v7h-10V9.500M15.500 6.500H17v3h-1.500" {...line} /><path d="M8.500 6H14v4H7.500V8z" fill="#fff" /><path d="M2 2v2M5 2v2M1 4.500h5v2l-1.500 1.500h-2L1 6.500zM3.500 8v4" fill="none" stroke="#fff" /></svg>
            </BarButton>
            <BarButton $width={24} type="button" aria-label="Wi-Fi">
              <svg width="16" height="16" viewBox="0 0 16 16"><path d="M2 14C2 8 7 3 14 3M5 14c0-5 4-8 9-8M8 14c0-3 3-5 6-5" fill="none" stroke="#fff" strokeWidth="1.100" /><circle cx="12.500" cy="13" r="1.700" fill="#fff" /></svg>
            </BarButton>
            <BarButton $width={24} type="button" aria-label="Громкость">
              <svg width="18" height="16" viewBox="0 0 18 16"><path d="M1 6h2.500L7 3v10l-3.500-3H1zM10 6c1 1 1 3 0 4M12.500 4c2 2 2 6 0 8M14.500 2c3 3 3 9 0 12" fill="none" stroke="#fff" strokeWidth="1.100" /></svg>
            </BarButton>
            <BarButton $width={24} type="button" aria-label="Облако">
              <svg width="16" height="12" viewBox="0 0 16 12"><path d="M4 12a4 4 0 0 1-.5-7.500A4.700 4.700 0 0 1 12.500 4 4 4 0 0 1 12 12z" fill="#fff" /><path d="M8 3.500 5 7h2v3h2V7h2z" fill="#0a2550" /></svg>
            </BarButton>
          </TrayIcons>
          <BarButton $width={36} type="button">РУС</BarButton>
          <Clock type="button"><div>0:19</div><div>10.11.2018</div></Clock>
          <BarButton $width={40} type="button" aria-label="Уведомления">
            <svg width="16" height="16" viewBox="0 0 16 16"><path d="M.7 1.500h14.600v11H10L8 15l-2-2.500H.7z" {...line} /></svg>
          </BarButton>
        </Tray>
      </TaskBar>
    </Screen>
  );
}
